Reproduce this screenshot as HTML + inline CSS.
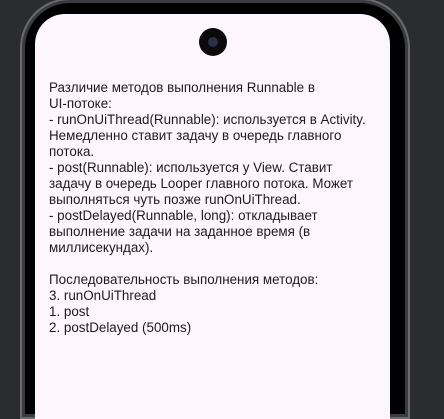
<!DOCTYPE html><html><head><style>
html,body{margin:0;padding:0;width:444px;height:419px;overflow:hidden;background:#2b2c30;position:relative}
.frame{position:absolute;left:20px;top:-2px;width:390px;height:421px;border-radius:50px 50px 0 0;background:#000;box-shadow:inset 0 0 0 2px #6a6b6e,inset 0 0 0 5px #3a3b3e,inset 0 0 0 7px #000}
.screen{position:absolute;left:35px;top:14px;width:355px;height:405px;border-radius:30px 30px 0 0;background:#fdf7fd}
.cam{position:absolute;left:199px;top:28px;width:28px;height:28px;border-radius:50%;background:#0a0a0a}
.cam:after{content:"";position:absolute;left:9px;top:9px;width:10px;height:10px;border-radius:50%;background:#2a2f45}
.t{position:absolute;left:49px;top:80px;font:13.4px/16px "Liberation Sans",sans-serif;color:#1d1b20;white-space:pre}
</style></head><body>
<div class="frame"></div><div class="screen"></div><div class="cam"></div>
<div class="t">Различие методов выполнения Runnable в
UI-потоке:
- runOnUiThread(Runnable): используется в Activity.
Немедленно ставит задачу в очередь главного
потока.
- post(Runnable): используется у View. Ставит
задачу в очередь Looper главного потока. Может
выполняться чуть позже runOnUiThread.
- postDelayed(Runnable, long): откладывает
выполнение задачи на заданное время (в
миллисекундах).

Последовательность выполнения методов:
3. runOnUiThread
1. post
2. postDelayed (500ms)</div>
</body></html>
